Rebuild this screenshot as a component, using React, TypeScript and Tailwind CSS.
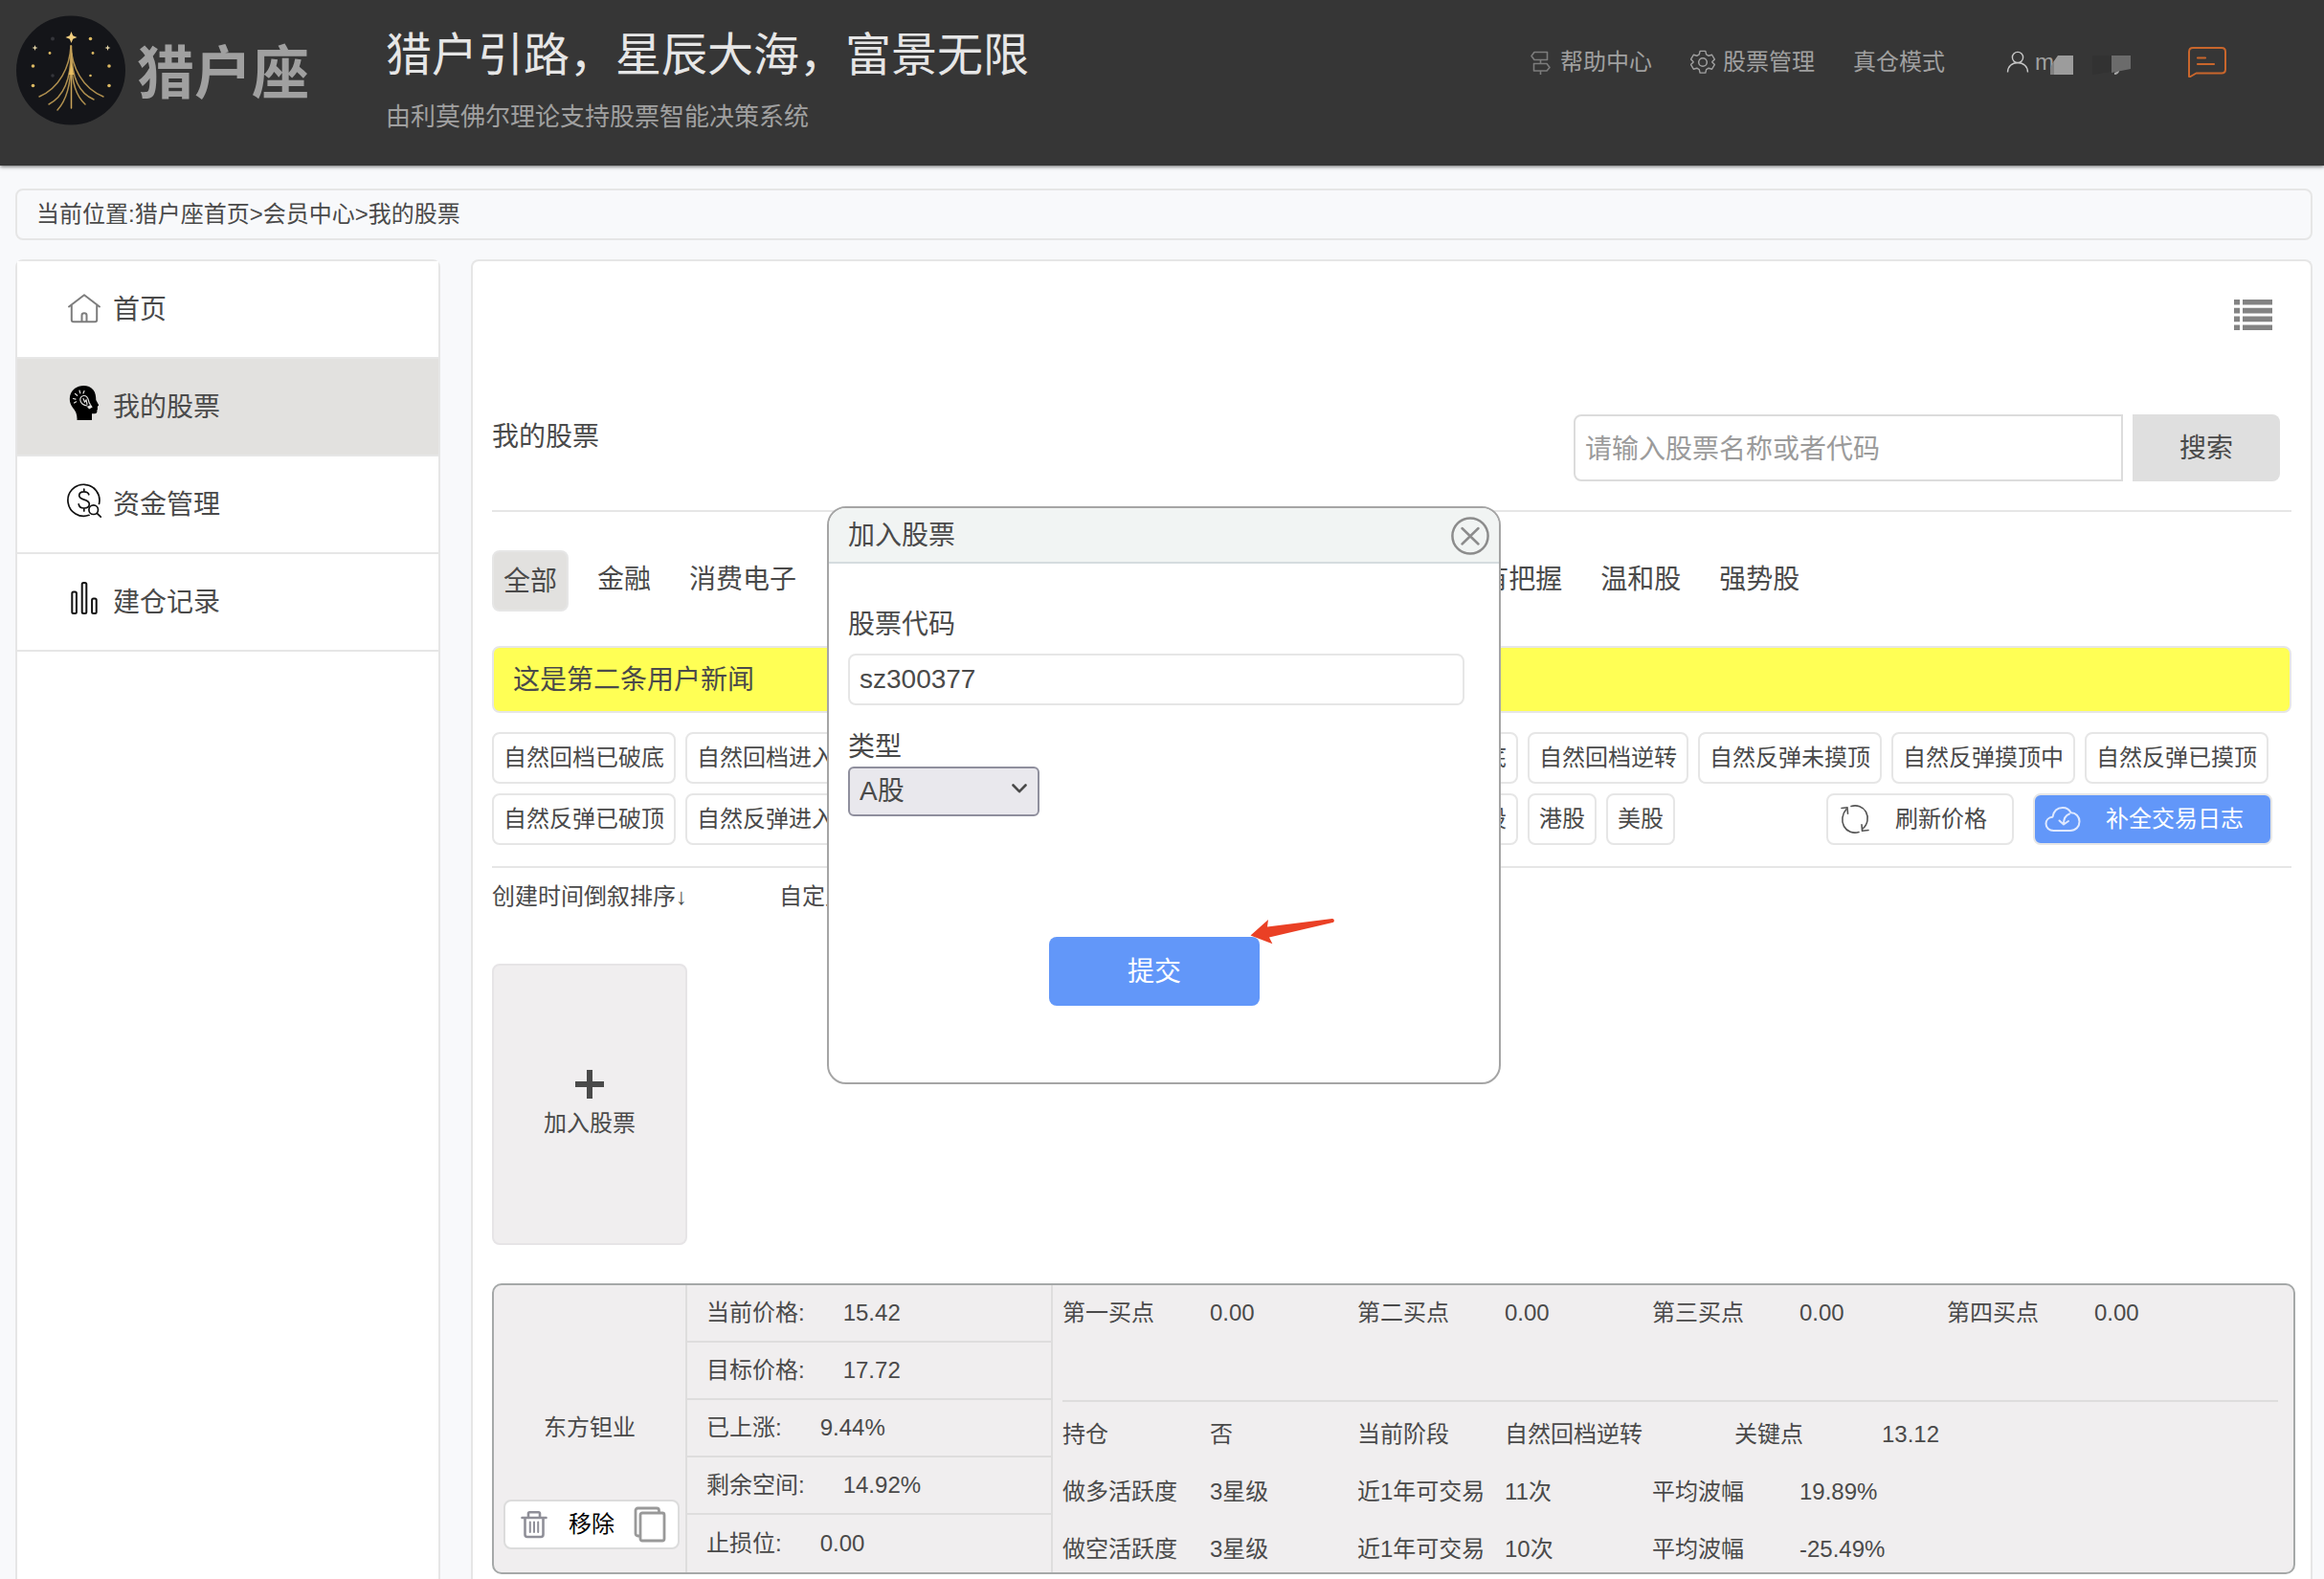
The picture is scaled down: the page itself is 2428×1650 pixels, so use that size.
import { useState } from 'react'
import type { ReactNode } from 'react'

const NAV = [
  { label: '首页', icon: <HomeIcon />, active: false },
  { label: '我的股票', icon: <HeadIcon />, active: true },
  { label: '资金管理', icon: <MoneyIcon />, active: false },
  { label: '建仓记录', icon: <BarsIcon />, active: false },
]

const GROUPS = ['金融', '消费电子', '半导体', '新能源', '医药生物', '人工智能', '白酒类', '有把握', '温和股', '强势股']

const STAGES = [
  ['自然回档已破底', '自然回档进入自然反弹', '自然回档未摸底', '自然回档摸底中', '自然回档已摸底', '自然回档逆转', '自然反弹未摸顶', '自然反弹摸顶中', '自然反弹已摸顶'],
  ['自然反弹已破顶', '自然反弹进入自然回档', '自然反弹逆转', '次级反弹进入自然反弹', '全部自选股', '港股', '美股'],
]

const PRICES = [
  ['当前价格:', '15.42'],
  ['目标价格:', '17.72'],
  ['已上涨:', '9.44%'],
  ['剩余空间:', '14.92%'],
  ['止损位:', '0.00'],
]

const BUY_POINTS = ['第一买点', '第二买点', '第三买点', '第四买点']

const DETAILS = [
  ['持仓', '否', '当前阶段', '自然回档逆转', '关键点', '13.12'],
  ['做多活跃度', '3星级', '近1年可交易', '11次', '平均波幅', '19.89%'],
  ['做空活跃度', '3星级', '近1年可交易', '10次', '平均波幅', '-25.49%'],
]

export default function App() {
  const [modalOpen, setModalOpen] = useState(true)

  return (
    <div className="relative flex min-h-screen flex-col overflow-hidden bg-[#f8f9fb] font-['Liberation_Sans','Noto_Sans_CJK_SC',sans-serif] text-2xl leading-8 text-[#4a4a4a]">
      <Header />
      <nav className="mt-6 mr-3 ml-4 rounded-lg border-2 border-[#e6e6e6] px-5 py-[9px]">
        当前位置:<a href="#home">猎户座首页</a>&gt;<a href="#member">会员中心</a>&gt;<a href="#stocks">我的股票</a>
      </nav>
      <div className="mt-5 mr-3 ml-4 flex flex-1 items-stretch gap-8">
        <Sidebar />
        <main className="min-w-0 flex-1 rounded-t-lg border-2 border-b-0 border-[#e6e6e6] bg-white px-5">
          <div className="flex justify-end pt-10 pr-5">
            <button type="button" aria-label="列表">
              <ListIcon />
            </button>
          </div>
          <SearchBar />
          <Groups />
          <div className="mt-9 rounded-lg border-2 border-[#e6e6e6] bg-[#ffff55] px-5 pt-[18px] pb-4 text-[28px]">这是第二条用户新闻</div>
          <Filters />
          <div className="flex gap-24 pt-[14px]">
            <button type="button">创建时间倒叙排序↓</button>
            <button type="button">自定义排序</button>
          </div>
          <button
            type="button"
            onClick={() => setModalOpen(true)}
            className="mt-[54px] flex h-[294px] w-[204px] flex-col items-center justify-center gap-[10px] rounded-lg border-2 border-[#e6e4e6] bg-[#f0eeef]"
          >
            <svg viewBox="0 0 30 30" className="h-[30px] w-[30px]" stroke="#4a4a4a" strokeWidth="6">
              <path d="M15 0v30M0 15h30" />
            </svg>
            加入股票
          </button>
          <StockCard />
        </main>
      </div>
      {modalOpen && <AddStockModal onClose={() => setModalOpen(false)} />}
    </div>
  )
}

function Header() {
  return (
    <header className="flex h-[173px] shrink-0 items-start bg-[#363636] text-[#a0a0a0] shadow-[0_1px_4px_rgba(0,0,0,0.6)]">
      <a href="#home" className="flex gap-3 pt-4 pl-[17px]">
        <Logo />
        <span className="pt-[30px] text-[60px] leading-[64px] font-bold">猎户座</span>
      </a>
      <div className="ml-20 pt-[26px]">
        <h1 className="text-5xl leading-[64px] text-[#e6e6e6]">猎户引路，星辰大海，富景无限</h1>
        <p className="pt-4 text-[26px] leading-8">由利莫佛尔理论支持股票智能决策系统</p>
      </div>
      <nav className="mt-[49px] mr-[102px] ml-auto flex h-8 items-center">
        <a href="#help" className="flex items-center gap-2">
          <SignIcon />
          帮助中心
        </a>
        <a href="#manage" className="ml-10 flex items-center gap-2">
          <GearIcon />
          股票管理
        </a>
        <a href="#mode" className="ml-10">
          真仓模式
        </a>
        <a href="#user" className="ml-16 flex items-center">
          <UserIcon />
          <span className="ml-[6px]">m</span>
          <MaskedName />
        </a>
        <a href="#message" aria-label="消息" className="ml-[60px]">
          <MessageIcon />
        </a>
      </nav>
    </header>
  )
}

function Sidebar() {
  return (
    <aside className="w-[444px] shrink-0 rounded-t-lg border-2 border-b-0 border-[#e6e6e6] bg-white">
      {NAV.map((item) => (
        <a
          key={item.label}
          href="#nav"
          className={[
            'flex h-[102px] items-center gap-3 border-b-2 border-[#e6e6e6] pl-[52px] text-[28px]',
            item.active ? 'bg-[#e2e1df]' : 'bg-white',
          ].join(' ')}
        >
          {item.icon}
          <span className="pt-[2px]">{item.label}</span>
        </a>
      ))}
    </aside>
  )
}

function SearchBar() {
  return (
    <div className="flex items-start justify-between border-b-2 border-[#e6e6e6] pt-[88px] pb-[30px]">
      <h2 className="pt-2 text-[28px]">我的股票</h2>
      <form className="flex gap-[10px] pr-3" onSubmit={(e) => e.preventDefault()}>
        <input
          type="text"
          aria-label="搜索股票"
          placeholder="请输入股票名称或者代码"
          className="h-[70px] w-[574px] rounded-l-lg border-2 border-[#dcdcdc] bg-white px-[10px] pt-1 text-[28px] outline-none placeholder:text-[#9b9b9b]"
        />
        <button type="submit" className="h-[70px] w-[154px] rounded-r-lg bg-[#dfdfdf] pt-[2px] text-[28px]">
          搜索
        </button>
      </form>
    </div>
  )
}

function Groups() {
  return (
    <div className="mt-10 flex h-16 items-center text-[28px]">
      <button type="button" className="h-16 rounded-lg border-2 border-[#e6e6e6] bg-[#e2e1df] px-[10px] pt-[2px] whitespace-nowrap">
        全部
      </button>
      <div className="ml-[30px] flex min-w-0 gap-10 overflow-hidden pb-[2px] whitespace-nowrap">
        {GROUPS.map((g) => (
          <button key={g} type="button">
            {g}
          </button>
        ))}
      </div>
    </div>
  )
}

function Chip({ children }: { children: ReactNode }) {
  return (
    <button type="button" className="h-[54px] rounded-lg border-2 border-[#e6e6e6] bg-white px-[10px] whitespace-nowrap">
      {children}
    </button>
  )
}

function Filters() {
  return (
    <div className="flex flex-col gap-[10px] border-b-2 border-[#e6e6e6] pt-5 pb-[22px]">
      <div className="flex gap-[10px]">
        {STAGES[0].map((s) => (
          <Chip key={s}>{s}</Chip>
        ))}
      </div>
      <div className="flex gap-[10px]">
        {STAGES[1].map((s) => (
          <Chip key={s}>{s}</Chip>
        ))}
        <div className="mr-5 ml-auto flex gap-5">
          <button type="button" className="flex h-[54px] items-center gap-[26px] rounded-lg border-2 border-[#e6e6e6] bg-white pr-[26px] pl-3 whitespace-nowrap">
            <RefreshIcon />
            刷新价格
          </button>
          <button type="button" className="flex h-[54px] items-center gap-[26px] rounded-lg border-2 border-[#e6e6e6] bg-[#6297f9] pr-[28px] pl-[10px] whitespace-nowrap text-white">
            <CloudIcon />
            补全交易日志
          </button>
        </div>
      </div>
    </div>
  )
}

function StockCard() {
  return (
    <section className="mt-10 -mr-1 flex rounded-[10px] border-2 border-[#a5a8a8] bg-[#f0eeef]">
      <div className="flex w-[202px] shrink-0 flex-col items-center border-r-2 border-[#dedddd] pt-[133px] pb-6">
        <span>东方钽业</span>
        <div className="mt-auto mr-[6px] flex h-[52px] w-[184px] items-center justify-between self-end rounded-lg border-2 border-[#dcdcdc] bg-white pr-3 pl-4 text-black">
          <button type="button" className="flex items-center gap-[22px]">
            <TrashIcon />
            移除
          </button>
          <button type="button" aria-label="复制">
            <CopyIcon />
          </button>
        </div>
      </div>
      <dl className="w-[382px] shrink-0 border-r-2 border-[#dedddd]">
        {PRICES.map(([label, value]) => (
          <div key={label} className="flex h-[60px] items-center gap-10 border-b-2 border-[#dedddd] pl-5 last:border-b-0">
            <dt>{label}</dt>
            <dd>{value}</dd>
          </div>
        ))}
      </dl>
      <div className="min-w-0 flex-1 pr-4 pl-[10px] whitespace-nowrap">
        <dl className="flex h-[122px] border-b-2 border-[#dedddd] pt-[13px]">
          {BUY_POINTS.map((point) => (
            <div key={point} className="flex">
              <dt className="w-[154px]">{point}</dt>
              <dd className="w-[154px]">0.00</dd>
            </div>
          ))}
        </dl>
        <div className="flex flex-col gap-7 pt-[18px]">
          {DETAILS.map((row) => (
            <div key={row[0]} className="flex">
              {row.map((cell, i) => (
                <span key={i} className={cell === '自然回档逆转' ? 'w-[240px]' : 'w-[154px]'}>
                  {cell}
                </span>
              ))}
            </div>
          ))}
        </div>
      </div>
    </section>
  )
}

function AddStockModal({ onClose }: { onClose: () => void }) {
  const [code, setCode] = useState('sz300377')

  return (
    <div
      role="dialog"
      aria-label="加入股票"
      className="absolute top-[529px] left-1/2 -ml-[350px] h-[604px] w-[704px] overflow-hidden rounded-[20px] border-2 border-[#a5a5a5] bg-white text-[28px]"
    >
      <div className="flex h-[58px] items-center justify-between border-b-2 border-[#d5dcdf] bg-[#f1f4f3] pt-[2px] pr-[10px] pl-5">
        加入股票
        <button type="button" aria-label="关闭" onClick={onClose}>
          <svg viewBox="0 0 40 40" className="h-10 w-10" fill="none" stroke="#8c8c8c" strokeWidth="2.5" strokeLinecap="round">
            <circle cx="20" cy="20" r="18.6" />
            <path d="M11.500 12l17 16.500M28.500 12l-17 16.500" />
          </svg>
        </button>
      </div>
      <form className="flex flex-col pt-12 pr-10 pl-5" onSubmit={(e) => e.preventDefault()}>
        <label htmlFor="code">股票代码</label>
        <input
          id="code"
          type="text"
          value={code}
          onChange={(e) => setCode(e.target.value)}
          className="mt-[14px] h-[54px] w-[644px] rounded-lg border-2 border-[#e6e6e6] px-[10px] outline-none"
        />
        <label htmlFor="market" className="mt-7">
          类型
        </label>
        <div className="relative mt-1 w-[200px]">
          <select id="market" className="h-[52px] w-full appearance-none rounded-md border-2 border-[#8f8f9d] bg-[#e9e8ed] px-[10px]">
            <option>A股</option>
            <option>港股</option>
            <option>美股</option>
          </select>
          <svg viewBox="0 0 16 10" className="pointer-events-none absolute top-[18px] right-[13px] h-[10px] w-4" fill="none" stroke="#4a4a4a" strokeWidth="2.6" strokeLinecap="round" strokeLinejoin="round">
            <path d="M1.500 1.500L8 8.200l6.500-6.700" />
          </svg>
        </div>
        <div className="relative mt-[126px] self-center">
          <button type="submit" className="h-[72px] w-[220px] rounded-lg bg-[#6297f9] pt-[2px] text-white">
            提交
          </button>
          <svg viewBox="0 0 90 30" className="absolute -top-5 left-[210px] h-[30px] w-[90px]" fill="#ea4025">
            <path d="M.5 18.500L19 2l-1 7.400L85.700 1c2.600-.2 3 3.500.6 4L20 20.600l3.400 6.600z" />
          </svg>
        </div>
      </form>
    </div>
  )
}

function Logo() {
  return (
    <svg viewBox="0 0 114 115" className="h-[115px] w-[114px]" fill="none">
      <circle cx="57" cy="57.500" r="57" fill="#141519" />
      <g stroke="#b0904f" strokeWidth="1.500" strokeLinecap="round">
        <path d="M57 32c-1 22-12 44-33 53" />
        <path d="M57 32c1 22 12 44 34 53" />
        <path d="M57 40c0 24-6 44-23 53" />
        <path d="M58 40c0 24 7 41 23 48" />
        <path d="M57 50c0 20-4 38-14 49" />
        <path d="M58 50c0 20 4 34 14 43" />
        <path d="M57.500 32v65" stroke="#c9a55a" />
      </g>
      <path d="M57.500 50l-2.500 12h5z" fill="#e8be62" />
      <path d="M57.500 17l1.700 4.300 4.300 1.700-4.300 1.700-1.700 4.300-1.700-4.300-4.300-1.700 4.300-1.700z" fill="#f3cf80" />
      <path d="M19.500 31l.8 2.200 2.200.8-2.200.8-.8 2.200-.8-2.200-2.200-.8 2.200-.8zM95.500 31l.8 2.200 2.200.8-2.200.8-.8 2.200-.8-2.200-2.200-.8 2.200-.8z" fill="#e5d6a8" />
      <g fill="#dcb963">
        <circle cx="77.500" cy="24.500" r="1.800" />
        <circle cx="35" cy="39.500" r="1.400" />
        <circle cx="80" cy="39.500" r="1.400" />
        <circle cx="17.500" cy="53" r="1.800" />
        <circle cx="97" cy="53" r="1.800" />
        <circle cx="17.500" cy="73.500" r="1.800" />
        <circle cx="97" cy="73.500" r="1.800" />
        <circle cx="77.500" cy="63" r="1.300" />
      </g>
      <circle cx="38" cy="24.500" r="2" fill="#34353a" />
      <circle cx="38" cy="63" r="1.800" fill="#34353a" />
    </svg>
  )
}

function SignIcon() {
  return (
    <svg viewBox="0 0 24 26" className="h-[26px] w-6" fill="none" stroke="#7c7c7c" strokeWidth="1.600" strokeLinejoin="round">
      <path d="M5 2.500h13.500v8H5L2 6.500zM4.500 14.500H18l3 4-3 3.500H4.500zM11.500 10.500v4M11.500 22v4" />
    </svg>
  )
}

function GearIcon() {
  return (
    <svg viewBox="0 0 26 26" className="h-[26px] w-[26px]" fill="none" stroke="#a0a0a0" strokeWidth="1.500" strokeLinejoin="round">
      <path d="M10 1h6l.9 3.700 2.600 1.500 3.600-1.100 3 5.100-2.700 2.600v.4l2.700 2.600-3 5.100-3.600-1.100-2.600 1.500L16 25h-6l-.9-3.700-2.600-1.500-3.600 1.100-3-5.100 2.700-2.600v-.4L-.1 10.200l3-5.100 3.600 1.100 2.600-1.500z" transform="translate(.6 .4) scale(.95)" />
      <circle cx="13" cy="13" r="4.300" />
    </svg>
  )
}

function UserIcon() {
  return (
    <svg viewBox="0 0 24 24" className="h-6 w-6" fill="none" stroke="#c8c8c8" strokeWidth="1.400">
      <circle cx="12" cy="7" r="5.600" />
      <path d="M1.500 22.500c0-6 4.500-10 10.500-10s10.500 4 10.500 10" />
    </svg>
  )
}

// Blocks that cover the rest of the account name.
function MaskedName() {
  return (
    <svg viewBox="0 0 84 22" className="-ml-1 h-[22px] w-[84px] translate-y-1">
      <path d="M0 20c-1-8 3-13 8-20h16v20z" fill="#9c9c9c" />
      <path d="M0 20c-1-6 1-10 4-14v14z" fill="#818181" />
      <path d="M44 0h20v17l-20 3z" fill="#323232" />
      <path d="M64 0h20v14l-20 4z" fill="#6b6b6b" />
      <path d="M67 18l5-2c0 2-2 4-5 4z" fill="#a8a8a8" />
    </svg>
  )
}

function MessageIcon() {
  return (
    <svg viewBox="0 0 40 32" className="h-8 w-10" fill="none" stroke="#c9662c" strokeWidth="2" strokeLinecap="round" strokeLinejoin="round">
      <path d="M1 31V5c0-2.500 1.500-4 4-4h30c2.500 0 4 1.500 4 4v18.500c0 2.500-1.500 4-4 4H8.500L2.500 31z" />
      <path d="M10 11.500h8M10 18h17" strokeWidth="2.200" />
    </svg>
  )
}

function HomeIcon() {
  return (
    <svg viewBox="0 0 36 44" className="h-11 w-9" fill="none" stroke="#7d7d7d" strokeWidth="2" strokeLinecap="round" strokeLinejoin="round">
      <path d="M2 19.500L18 7.300l16 12.200M4.800 17.500v15.800c0 1.300.7 2 2 2h22.400c1.300 0 2-.7 2-2V17.500M15.500 35v-6.500c0-3 5-3 5 0V35" />
    </svg>
  )
}

function HeadIcon() {
  return (
    <svg viewBox="0 0 36 44" className="h-11 w-9">
      <path d="M10.500 36c.3-6-1.500-9.500-4.500-13C1 16.500 2 7.500 8 3c6-4.200 15-4 19.500 1.500 2.300 3 2.700 6.500 2.800 10.500l2.700 5c.3.800-.1 1.200-1 1.400l-.2 1.600.2 1.800-.7.900c.4 2-.3 3.500-2.300 3.500H26V36z" fill="#000" />
      <g fill="none" stroke="#e2e1df" strokeWidth="1.200" strokeLinecap="round">
        <path d="M6.500 13.500l2.500.6M8.500 8.500l2.200 1.800M13 5l.8 2.800M18 5.500l-1 2.500M7.500 18l2.200-1.200" />
        <path d="M21 21c-3.500-.6-6.300-2.600-7-5.200-.7-2.700.7-5 3.300-5.300 2.900-.2 4.700 2.500 5.200 5.200.3 1.700.8 2.800 1.700 3.800M17 13.500l1.500 3.500 1.500-2 1 4.500" />
      </g>
      <path d="M21 22l4-2.200 1.700 2.700-3.600 1.900z" fill="#e2e1df" />
    </svg>
  )
}

function MoneyIcon() {
  return (
    <svg viewBox="0 0 36 44" className="h-11 w-9" fill="none" stroke="#111" strokeWidth="1.700" strokeLinecap="round">
      <path d="M23 33.300A16.500 16.500 0 1 1 33.500 21.500" />
      <circle cx="27.700" cy="27.700" r="4.800" />
      <path d="M31.300 31.300l4 3.900" />
      <path d="M22.800 11.800c-.6-2-2.500-3-5-3-3 0-5.100 1.600-5.100 4 0 5.600 10.600 3 10.600 8.900 0 2.600-2.300 4.300-5.500 4.300-3.100 0-5.200-1.600-5.600-4.200M17.800 6v2.800M17.800 26v3" />
    </svg>
  )
}

function BarsIcon() {
  return (
    <svg viewBox="0 0 36 44" className="h-11 w-9" fill="none" stroke="#111" strokeWidth="2">
      <rect x="5.300" y="11.500" width="4.600" height="22.500" rx="1.500" />
      <rect x="15.700" y="2" width="4.600" height="32" rx="1.500" />
      <rect x="26.100" y="18.500" width="4.600" height="15.500" rx="1.500" />
    </svg>
  )
}

function ListIcon() {
  return (
    <svg viewBox="0 0 40 32" className="h-8 w-10" fill="#838383">
      <path d="M0 0h6v5.600H0zM9 0h31v5.600H9zM0 8.800h6v5.600H0zM9 8.800h31v5.600H9zM0 17.600h6v5.600H0zM9 17.600h31v5.600H9zM0 26.400h6V32H0zM9 26.400h31V32H9z" />
    </svg>
  )
}

function RefreshIcon() {
  return (
    <svg viewBox="0 0 32 32" className="h-8 w-8" fill="none" stroke="#555" strokeWidth="1.600" strokeLinecap="round" strokeLinejoin="round">
      <path d="M12 2.500C18 .8 24.500 3 27.500 8.500c3 5.500 2 13-3.500 17.500M20 29.500C14 31.200 7.500 29 4.500 23.500 1.500 18 2.500 10.500 7 5.500" />
      <path d="M2 4.500l6-.8.5 6.500M30 27.500l-6.500.8-.5-6.500" />
    </svg>
  )
}

function CloudIcon() {
  return (
    <svg viewBox="0 0 38 28" className="h-7 w-[38px]" fill="none" stroke="#dfe9ff" strokeWidth="2" strokeLinecap="round" strokeLinejoin="round">
      <path d="M12 26H9.500C5 26 1.500 23 1.500 18.800c0-3.900 3-6.800 7-7.100C9.500 5.500 13.500 2 19 2c4 0 7 2 8.600 5.300 5.200 0 8.900 4 8.900 9.200 0 5.300-4 9.500-9.500 9.500H12" />
      <path d="M26 8.500c-4 1.500-6 5.500-6 10.500M15.500 15.500l4.500 4 5-3.500" />
    </svg>
  )
}

function TrashIcon() {
  return (
    <svg viewBox="0 0 28 30" className="h-[30px] w-7" fill="none" stroke="#8f8f98" strokeWidth="2.600" strokeLinecap="round" strokeLinejoin="round">
      <path d="M1.500 8h25M8 7.500V3.500c0-.8.500-1.300 1.300-1.300h9.400c.8 0 1.300.5 1.300 1.300v4M4.500 8.500v17c0 1.500 1 2.500 2.500 2.500h14c1.500 0 2.500-1 2.500-2.500v-17" />
      <path d="M9.800 12.500v10.500M14 12.500v10.500M18.200 12.500v10.500" strokeWidth="2" />
    </svg>
  )
}

function CopyIcon() {
  return (
    <svg viewBox="0 0 34 38" className="h-[38px] w-[34px]" fill="none" stroke="#999" strokeWidth="2.800" strokeLinejoin="round">
      <path d="M7 31H4.500c-1.500 0-2.500-1-2.500-2.500V4.500C2 3 3 2 4.500 2H24c1.500 0 2.500 1 2.500 2.500V7" />
      <rect x="7" y="7" width="25" height="29" rx="2" />
    </svg>
  )
}
